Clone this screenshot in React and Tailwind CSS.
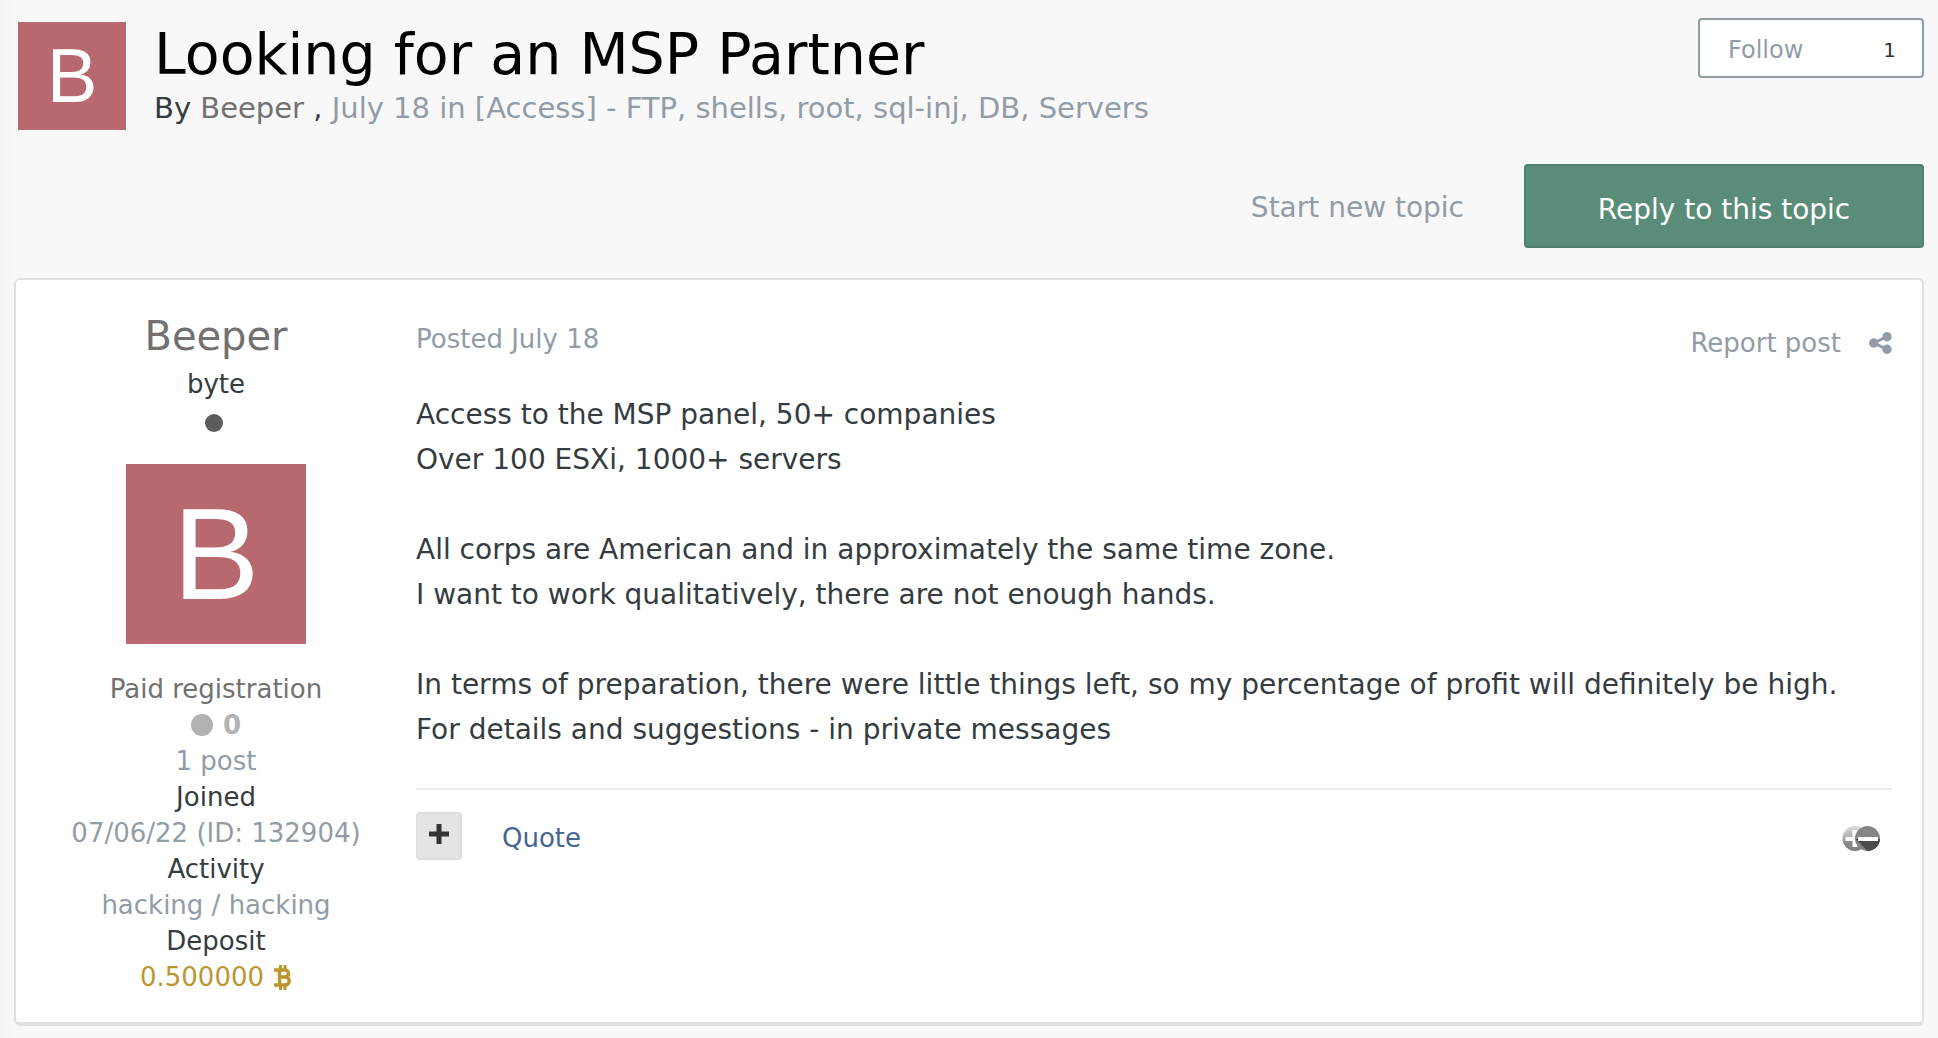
const postLines = [
  "Access to the MSP panel, 50+ companies",
  "Over 100 ESXi, 1000+ servers",
  "",
  "All corps are American and in approximately the same time zone.",
  "I want to work qualitatively, there are not enough hands.",
  "",
  "In terms of preparation, there were little things left, so my percentage of profit will definitely be high.",
  "For details and suggestions - in private messages",
];

function BitcoinIcon() {
  return (
    <svg viewBox="0 0 18 25" className="h-[25px] w-[18px]" fill="none" stroke="currentColor" strokeWidth="3.5">
      <path d="M0 5H11A3.500 3.500 0 0 1 11 12H5.500M11 12A4 4 0 0 1 11.500 20H0M5.500 5V20" />
      <path d="M6.500 0V4M11 0V4M6.500 21V25M11 21V25" strokeWidth="3" />
    </svg>
  );
}

function ShareIcon() {
  return (
    <svg viewBox="0 0 23 22" className="h-[22px] w-[23px]" fill="currentColor">
      <path d="M18 4.500L5 11L18 17.500" fill="none" stroke="currentColor" strokeWidth="3" />
      <circle cx="18" cy="4.700" r="4.700" />
      <circle cx="4.700" cy="11" r="4.700" />
      <circle cx="18" cy="17.300" r="4.700" />
    </svg>
  );
}

function PlusIcon() {
  return (
    <svg viewBox="0 0 20 20" className="h-5 w-5" fill="none" stroke="currentColor" strokeWidth="5">
      <path d="M0 10H20M10 0V20" />
    </svg>
  );
}

function ReputationIcon() {
  return (
    <svg viewBox="0 0 38 27" className="h-[27px] w-[38px]">
      <defs>
        <linearGradient id="plus" x1="0" y1="0" x2="0" y2="1">
          <stop offset="0" stopColor="#dedede" />
          <stop offset="0.4" stopColor="#b4b4b4" />
          <stop offset="0.7" stopColor="#868686" />
          <stop offset="1" stopColor="#808080" />
        </linearGradient>
      </defs>
      <circle cx="13" cy="13.500" r="12.500" fill="url(#plus)" />
      <path d="M3.500 14H18" stroke="#fff" strokeWidth="4" />
      <path d="M13 5V22" stroke="#fff" strokeWidth="5" />
      <circle cx="25.500" cy="13.500" r="12.500" fill="#868686" />
      <path d="M13.500 14H38A12.500 12.500 0 0 1 25.500 26Z" fill="#4c4c4c" />
      <path d="M16 14H36" stroke="#fff" strokeWidth="4" />
    </svg>
  );
}

function TopicHeader() {
  return (
    <header className="flex items-start justify-between pl-1">
      <div className="flex gap-7 pt-1">
        <div className="flex h-[108px] w-[108px] shrink-0 items-center justify-center bg-[#b8686f] font-[Liberation_Sans] text-[76px] leading-none text-white">
          B
        </div>
        <div>
          <h1 className="text-[57px] leading-[64px] text-black">Looking for an MSP Partner</h1>
          <p className="text-[29px] leading-[44px]">
            By{" "}
            <a href="#beeper" className="text-[#717171]">
              Beeper
            </a>{" "}
            ,{" "}
            <a href="#forum" className="text-[#929ca7]">
              July 18 in [Access] - FTP, shells, root, sql-inj, DB, Servers
            </a>
          </p>
        </div>
      </div>
      <button
        type="button"
        className="flex h-[60px] w-[226px] items-center justify-between rounded border-2 border-[#929ca7] bg-white pt-1 pr-[26px] pl-7 text-2xl text-[#929ca7]"
      >
        Follow
        <span className="text-xl text-[#333333]">1</span>
      </button>
    </header>
  );
}

function AuthorPanel() {
  return (
    <aside className="flex w-[400px] shrink-0 flex-col items-center pt-[30px] pb-[27px] text-center text-[26px] leading-9">
      <h2 className="mb-1 text-[40px] leading-[52px] text-[#717171]">
        <a href="#beeper">Beeper</a>
      </h2>
      <p>byte</p>
      <span className="mt-3 mr-1 h-[18px] w-[18px] rounded-full bg-[#5c5c5c]" />
      <div className="mt-8 mb-[27px] flex h-[180px] w-[180px] items-center justify-center bg-[#b8686f] font-[Liberation_Sans] text-[130px] leading-none text-white">
        B
      </div>
      <p className="text-[#717171]">Paid registration</p>
      <p className="flex items-center gap-[10px] font-bold text-[#b2b2b2]">
        <span className="h-[22px] w-[22px] rounded-full bg-[#b2b2b2]" />0
      </p>
      <p className="text-[#929ca7]">1 post</p>
      <p>Joined</p>
      <p className="text-[#929ca7]">07/06/22 (ID: 132904)</p>
      <p>Activity</p>
      <p className="text-[#929ca7]">hacking / hacking</p>
      <p>Deposit</p>
      <p className="flex items-center gap-[10px] text-[#bd962f]">
        0.500000
        <BitcoinIcon />
      </p>
    </aside>
  );
}

function App() {
  return (
    <div className="min-h-screen bg-[linear-gradient(to_right,#f4f4f4,#f8f8f8_16px)] px-[14px] pt-[18px] pb-3 font-[DejaVu_Sans,sans-serif] text-[#353c41]">
      <TopicHeader />

      <div className="mt-[34px] flex items-center justify-end gap-[60px] text-[28px]">
        <a href="#new" className="pt-1 text-[#929ca7]">
          Start new topic
        </a>
        <button
          type="button"
          className="h-[84px] w-[400px] rounded border-2 border-[#50816c] bg-[#5a8d79] pt-2 text-white"
        >
          Reply to this topic
        </button>
      </div>

      <article className="mt-[30px] flex rounded-md border-2 border-b-4 border-[#e0e0e0] bg-white">
        <AuthorPanel />
        <div className="min-w-0 flex-1 pt-[41px] pr-[30px]">
          <div className="flex justify-between text-[26px] leading-9 text-[#929ca7]">
            <p>Posted July 18</p>
            <div className="flex items-center gap-7 pt-1">
              <a href="#report">Report post</a>
              <button type="button" aria-label="Share">
                <ShareIcon />
              </button>
            </div>
          </div>

          <div className="mt-[31px] text-[28px] leading-[45px]">
            {postLines.map((line, index) => (
              <p key={index} className="min-h-[45px]">
                {line}
              </p>
            ))}
          </div>

          <div className="mt-9 flex items-center border-t-2 border-[#ebebeb] pt-[22px] text-[26px]">
            <button
              type="button"
              aria-label="Multiquote"
              className="flex h-12 w-[46px] items-center justify-center rounded border-2 border-[#dedede] bg-[#e4e4e4] pb-1 text-[#333333]"
            >
              <PlusIcon />
            </button>
            <a href="#quote" className="ml-10 pt-1 text-[#466590]">
              Quote
            </a>
            <button type="button" aria-label="Reputation" className="mt-1 mr-3 ml-auto">
              <ReputationIcon />
            </button>
          </div>
        </div>
      </article>
    </div>
  );
}

export default App;
